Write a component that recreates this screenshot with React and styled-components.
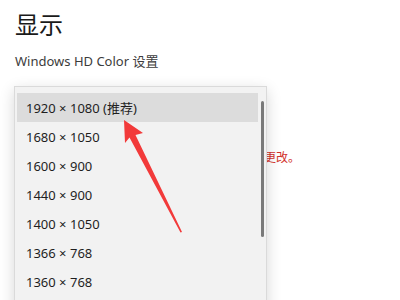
import React from "react";
import styled, { createGlobalStyle } from "styled-components";

const GlobalStyle = createGlobalStyle`
  html, body {
    margin: 0;
    background: #ffffff;
    overflow: hidden;
  }
  body {
    font-family: "Noto Sans", "Noto Sans CJK SC", sans-serif;
    color: #1a1a1a;
  }
`;

const Page = styled.div`
  position: relative;
  width: 400px;
  height: 300px;
  padding: 10px 15px 0;
  box-sizing: border-box;
  overflow: hidden;
`;

const Title = styled.h1`
  margin: 0;
  font-family: "Noto Sans CJK SC", sans-serif;
  font-size: 24px;
  font-weight: 400;
  line-height: 28px;
  color: #1a1a1a;
`;

const Subtitle = styled.div`
  margin-top: 14px;
  font-size: 13px;
  line-height: 18px;
  color: #3c3c3c;
`;

const FieldArea = styled.div`
  position: relative;
  margin-top: 16px;
`;

const Note = styled.div`
  width: 285px;
  padding-top: 64px;
  text-align: right;
  font-family: "Noto Sans CJK SC", sans-serif;
  font-size: 12px;
  line-height: 14px;
  color: #d2312b;
  white-space: nowrap;
`;

const Menu = styled.ul`
  position: absolute;
  top: 0;
  left: -1px;
  width: 253px;
  height: 230px;
  margin: 0;
  padding: 6px 8px 0 2px;
  list-style: none;
  box-sizing: border-box;
  background: #f2f2f2;
  border: 1px solid #dadada;
  border-bottom: none;
  box-shadow: 0 4px 14px rgba(0, 0, 0, 0.16);
  overflow: hidden;
`;

const Item = styled.li`
  height: 29px;
  padding-left: 9px;
  display: flex;
  align-items: center;
  font-size: 13px;
  color: #1f1f1f;
  background: ${(p) => (p.$active ? "#dcdcdc" : "transparent")};
`;

const Scrollbar = styled.div`
  position: absolute;
  top: 14px;
  right: 2px;
  width: 3px;
  height: 136px;
  border-radius: 2px;
  background: #7a7a7a;
`;

const Arrow = styled.svg`
  position: absolute;
  left: 0;
  top: 0;
  pointer-events: none;
`;

const modes = [
  "1920 × 1080 (推荐)",
  "1680 × 1050",
  "1600 × 900",
  "1440 × 900",
  "1400 × 1050",
  "1366 × 768",
  "1360 × 768",
  "1280 × 1024",
];

export default function App() {
  return (
    <>
      <GlobalStyle />
      <Page>
        <Title>显示</Title>
        <Subtitle>Windows HD Color 设置</Subtitle>
        <FieldArea>
          <Note>需要重新启动才能应用更改。</Note>
          <Menu>
            {modes.map((m, i) => (
              <Item key={m} $active={i === 0}>
                {m}
              </Item>
            ))}
            <Scrollbar />
          </Menu>
        </FieldArea>
        <Arrow width="400" height="300" viewBox="0 0 400 300">
          <polygon
            points="124,120 143,133 135.5,135 182,232 180.5,232.5 129.5,137.5 125,143"
            fill="#f23a3a"
          />
        </Arrow>
      </Page>
    </>
  );
}
